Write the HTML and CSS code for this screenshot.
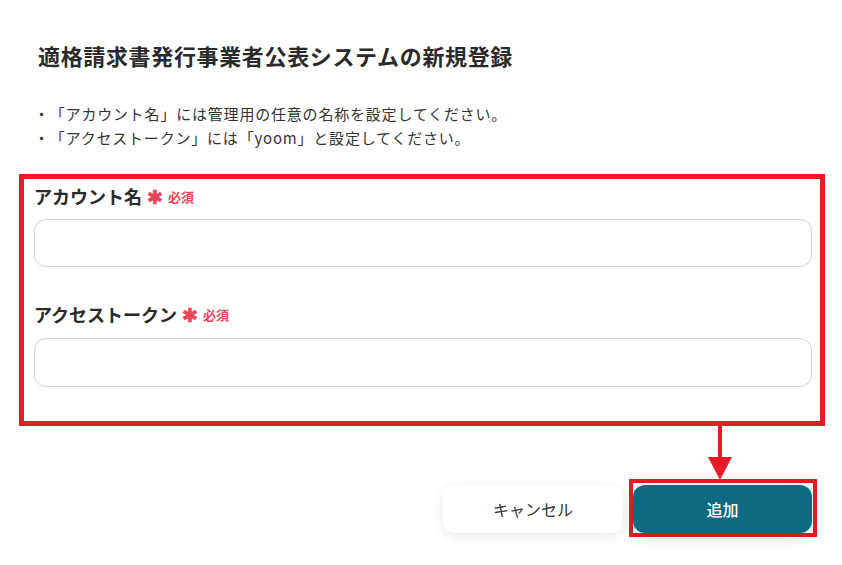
FILE: index.html
```html
<!DOCTYPE html>
<html lang="ja">
<head>
<meta charset="utf-8">
<title>適格請求書発行事業者公表システムの新規登録</title>
<link rel="stylesheet" href="styles.css">
</head>
<body>
<div class="page">
  <h1 class="title">適格請求書発行事業者公表システムの新規登録</h1>
  <ul class="notes">
    <li>・「アカウント名」には管理用の任意の名称を設定してください。</li>
    <li>・「アクセストークン」には「yoom」と設定してください。</li>
  </ul>
  <div class="form-box">
    <div class="field">
      <label class="label">アカウント名<span class="req-mark">✱</span><span class="req">必須</span></label>
      <div class="input"></div>
    </div>
    <div class="field field-second">
      <label class="label">アクセストークン<span class="req-mark">✱</span><span class="req">必須</span></label>
      <div class="input"></div>
    </div>
  </div>
  <div class="arrow-row">
    <svg class="arrow" width="24" height="54" viewBox="0 0 24 54">
      <rect x="10" y="0" width="4" height="33" fill="#e81c24"/>
      <polygon points="0,31 24,31 12,54" fill="#e81c24"/>
    </svg>
  </div>
  <div class="actions">
    <button class="btn btn-cancel">キャンセル</button>
    <div class="highlight">
      <button class="btn btn-add">追加</button>
    </div>
  </div>
</div>
</body>
</html>
```
FILE: styles.css
```css
* { box-sizing: border-box; }
html, body { margin: 0; padding: 0; background: #ffffff; }
body {
  font-family: "Noto Sans CJK JP", "Noto Sans", "Liberation Sans", sans-serif;
  color: #333333;
  width: 842px;
  height: 565px;
  overflow: hidden;
  text-spacing-trim: space-all;
}
.page { padding-top: 39px; }
.title {
  margin: 0 0 0 38px;
  font-size: 22px;
  line-height: 32px;
  font-weight: 700;
  color: #2a2a2a;
  letter-spacing: 0.65px;
}
.notes {
  list-style: none;
  margin: 31px 0 0 34px;
  padding: 0;
  font-size: 15px;
  line-height: 24px;
  color: #333333;
  letter-spacing: 0.8px;
}
.form-box {
  margin: 24px 0 0 19px;
  width: 806px;
  height: 252px;
  border: 5px solid #e81c24;
  padding: 2px 8px 0 10px;
}
.label {
  display: flex;
  align-items: center;
  font-size: 18px;
  line-height: 26px;
  font-weight: 700;
  color: #2a2a2a;
}
.req-mark {
  color: #f0445a;
  font-size: 19px;
  margin-left: 5px;
  font-weight: 700;
}
.req {
  color: #f0445a;
  font-size: 13px;
  margin-left: 5px;
  font-weight: 700;
  padding-top: 3px;
}
.input {
  margin-top: 9px;
  height: 48px;
  border: 1px solid #cdd3dc;
  border-radius: 12px;
  background: #fff;
}
.field-second { margin-top: 32px; }
.field-second .input { margin-top: 10px; height: 49px; }
.arrow-row {
  display: flex;
  justify-content: flex-end;
  padding-right: 110px;
  height: 53px;
}
.arrow { display: block; }
.actions {
  display: flex;
  justify-content: flex-end;
  align-items: flex-start;
  padding-right: 25px;
}
.btn {
  font-family: inherit;
  border: none;
  width: 180px;
  height: 48px;
  border-radius: 12px;
  font-size: 16px;
  cursor: pointer;
}
.btn-cancel {
  margin-top: 6px;
  margin-right: 6px;
  background: #ffffff;
  color: #333333;
  box-shadow: 0 3px 14px rgba(0, 0, 0, 0.09);
}
.highlight {
  border: 4px solid #e81c24;
  padding: 2px 1px 0 0;
  width: 188px;
  height: 58px;
}
.btn-add {
  width: 179px;
  background: #0e6a82;
  color: #ffffff;
  font-weight: 500;
  box-shadow: 0 4px 16px rgba(0, 0, 0, 0.15);
}
```
